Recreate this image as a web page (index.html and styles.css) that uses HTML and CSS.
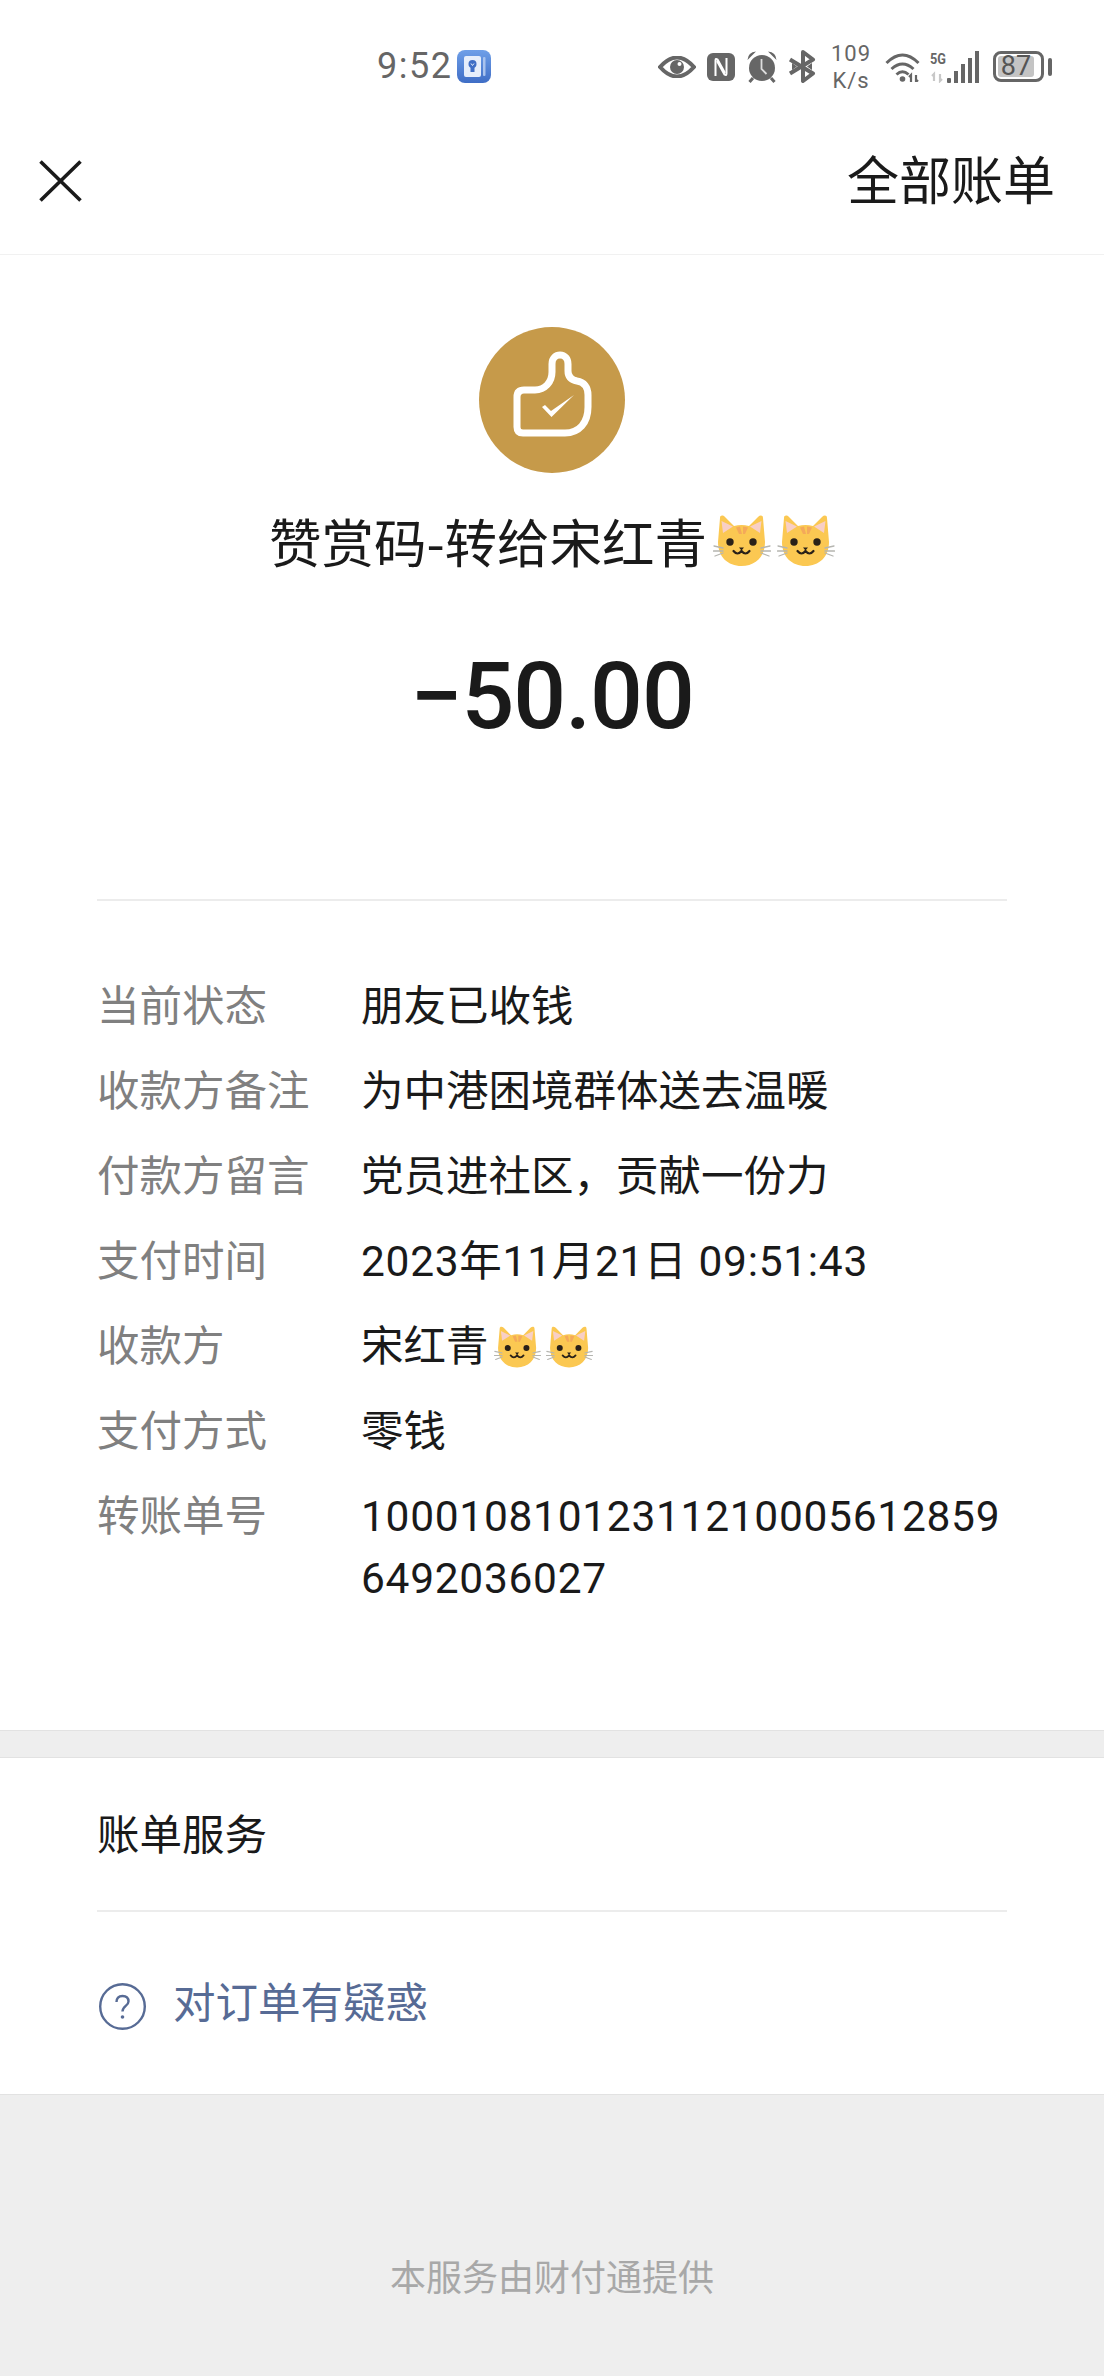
FILE: index.html
```html
<!DOCTYPE html>
<html lang="zh">
<head>
<meta charset="utf-8">
<title>账单详情</title>
<link rel="stylesheet" href="styles.css">
</head>
<body>
<svg class="defs" width="0" height="0" aria-hidden="true">
  <defs>
    <linearGradient id="appgrad" x1="0" y1="0" x2="0" y2="1">
      <stop offset="0" stop-color="#6f9fe8"/>
      <stop offset="1" stop-color="#3f6ec6"/>
    </linearGradient>
    <symbol id="cat" viewBox="0 0 58 52">
      <path d="M7 4C7 1 10 1 12 3L21 12Q28.500 10 36 12L45 3C47 1 50 1 50 4L52 28C52 43 42 52 28.500 52C15 52 5 43 5 28Z" fill="#fbc852"/>
      <path d="M8.500 7L20 12.500L10 19Z M48.500 7L37 12.500L47 19Z" fill="#f8cfc6"/>
      <path d="M23 13.500L27 12.500L29 20L26 20Z M30 12.500L35 13.500L32 20L30 20Z" fill="#f4a95a"/>
      <g stroke="#b5b5b0" stroke-width="1.300" stroke-linecap="round" fill="none">
        <path d="M1 32l9 2M0.500 37l9.500 0M2 42l8-3M57 32l-9 2M57.500 37l-9.500 0M56 42l-8-3"/>
      </g>
      <circle cx="17" cy="28" r="3.700" fill="#2a2118"/>
      <circle cx="40" cy="28" r="3.700" fill="#2a2118"/>
      <path d="M26 33.500h5l-2.500 3z" fill="#2a2118"/>
      <path d="M20.500 37q4 5 8 0q4 5 8 0" fill="none" stroke="#2a2118" stroke-width="2.200" stroke-linecap="round"/>
    </symbol>
  </defs>
</svg>

<header class="status">
  <span class="time">9:52</span>
  <svg class="appicon" viewBox="0 0 34 33">
    <rect width="34" height="33" rx="8" fill="url(#appgrad)"/>
    <rect x="7" y="6" width="17" height="21" rx="2" fill="#e6eefb"/>
    <rect x="26" y="7" width="2.500" height="19" rx="1" fill="#a9c3ee"/>
    <circle cx="15.500" cy="14" r="4" fill="#3f6ec6"/>
    <rect x="13.500" y="17" width="4" height="5" fill="#3f6ec6"/>
    <path d="M14 13.500l1.500 2 1.500-2" fill="none" stroke="#e6eefb" stroke-width="1"/>
  </svg>
  <div class="status-right">
    <svg class="s-eye" viewBox="0 0 38 22">
      <path d="M2 11Q19-8 36 11Q19 30 2 11Z" fill="none" stroke="#666" stroke-width="4"/>
      <circle cx="19" cy="11" r="7" fill="#666"/>
      <circle cx="21.500" cy="8" r="2" fill="#fff"/>
    </svg>
    <svg class="s-nfc" viewBox="0 0 28 28">
      <rect width="28" height="28" rx="6" fill="#666"/>
      <path d="M8.500 23V7.500Q8.500 5 10.500 6.500L18 20" fill="none" stroke="#fff" stroke-width="2"/>
      <path d="M19.500 5V20.500Q19.500 23 17.500 21.500L10 8" fill="none" stroke="#fff" stroke-width="2"/>
    </svg>
    <svg class="s-alarm" viewBox="0 0 30 32">
      <path d="M0.500 9Q1 1 9 0.500Z M29.500 9Q29 1 21 0.500Z" fill="#666"/>
      <path d="M6 27l-3.500 4M24 27l3.500 4" stroke="#666" stroke-width="3"/>
      <circle cx="15" cy="17" r="13" fill="#666"/>
      <path d="M14.500 8v10l5 5" fill="none" stroke="#ddd" stroke-width="1.800"/>
    </svg>
    <svg class="s-bt" viewBox="0 0 28 33">
      <path d="M2 9.500l23 14-10 7.500V2l10 7.500L2 23.500" fill="none" stroke="#666" stroke-width="4" stroke-linejoin="round"/>
      <path d="M19 16.500l5-3.500v7zM9 16.500l-5-3.500v7z" fill="#666"/>
    </svg>
    <div class="speed"><span>109</span><span>K/s</span></div>
    <svg class="s-wifi" viewBox="0 0 37 30">
      <path d="M1.500 11Q17.500-5 33.500 11M6.500 17Q17.500 7 28.500 17M11.500 22.500Q17.500 17 23.500 22.500" fill="none" stroke="#666" stroke-width="3"/>
      <circle cx="17.500" cy="27" r="2.800" fill="#666"/>
      <path d="M26 30v-7l-2 2M31 23v7l2-2" fill="none" stroke="#666" stroke-width="2.200"/>
    </svg>
    <svg class="s-signal" viewBox="0 0 50 32">
      <text x="0" y="13" class="s-5g" textLength="16" lengthAdjust="spacingAndGlyphs">5G</text>
      <path d="M4 30v-7l-2 2M10 23v7l2-2" fill="none" stroke="#c8c8c8" stroke-width="2.200"/>
      <rect x="17" y="27" width="4" height="5" rx="1" fill="#666"/>
      <rect x="24" y="20" width="4" height="12" fill="#666"/>
      <rect x="31" y="13" width="4" height="19" fill="#666"/>
      <rect x="38" y="7" width="4" height="25" fill="#666"/>
      <rect x="45" y="0" width="4" height="32" fill="#666"/>
    </svg>
    <div class="battery">
      <div class="battery-body"><span class="battery-fill">87</span></div>
      <span class="battery-nub"></span>
    </div>
  </div>
</header>

<nav class="nav">
  <svg class="close" viewBox="0 0 43 42">
    <path d="M1.500 1.500L41.500 40.500M41.500 1.500L1.500 40.500" fill="none" stroke="#1a1a1a" stroke-width="3.600"/>
  </svg>
  <span class="nav-link">全部账单</span>
</nav>

<main class="detail">
  <div class="summary">
    <svg class="badge" viewBox="0 0 146 146">
      <circle cx="73" cy="73" r="73" fill="#c69a4a"/>
      <path d="M38 70Q38 63 45 63L56 63C66 63 73 55 73 45L73 37C73 31 77 28 81 28C86 28 89 32 89 37L89 44C89 50 93 53 98 54C105 55 109 60 109 68L109 80C109 96 100 106 86 106L44 106Q38 106 38 100Z" fill="none" stroke="#fff" stroke-width="7" stroke-linejoin="round"/>
      <path d="M63 80L66 78L72 84L95 68L72.500 90Z" fill="#fff"/>
    </svg>
    <h1 class="title">赞赏码-转给宋红青<svg class="cat-lg"><use href="#cat"/></svg><svg class="cat-lg"><use href="#cat"/></svg></h1>
    <div class="amount">−50.00</div>
  </div>

  <dl class="rows">
    <div class="row"><dt>当前状态</dt><dd>朋友已收钱</dd></div>
    <div class="row"><dt>收款方备注</dt><dd>为中港困境群体送去温暖</dd></div>
    <div class="row"><dt>付款方留言</dt><dd>党员进社区，贡献一份力</dd></div>
    <div class="row"><dt>支付时间</dt><dd class="num">2023年11月21日 09:51:43</dd></div>
    <div class="row"><dt>收款方</dt><dd>宋红青<svg class="cat-sm"><use href="#cat"/></svg><svg class="cat-sm"><use href="#cat"/></svg></dd></div>
    <div class="row"><dt>支付方式</dt><dd>零钱</dd></div>
    <div class="row"><dt>转账单号</dt><dd class="num">10001081012311210005612859<br>6492036027</dd></div>
  </dl>
</main>

<section class="service">
  <div class="service-title">账单服务</div>
  <div class="service-link">
    <svg class="help" viewBox="0 0 47 47">
      <circle cx="23.500" cy="23.500" r="22.300" fill="none" stroke="#576b95" stroke-width="2.400"/>
      <path d="M17.500 19Q17.500 13 23.500 13Q29.500 13 29.500 18.500C29.500 23 23.500 23 23.500 28.500" fill="none" stroke="#576b95" stroke-width="2.400"/>
      <circle cx="23.500" cy="34" r="1.800" fill="#576b95"/>
    </svg>
    <span>对订单有疑惑</span>
  </div>
</section>

<footer class="footer">本服务由财付通提供</footer>
</body>
</html>
```
FILE: styles.css
```css
* { box-sizing: border-box; }
html, body { margin: 0; padding: 0; }
body {
  width: 1104px;
  height: 2376px;
  overflow: hidden;
  background: #eeeeee;
  font-family: "Noto Sans CJK SC", "Noto Sans", sans-serif;
  color: #1a1a1a;
}
.defs { position: absolute; }

/* status bar */
.status {
  height: 120px;
  background: #fff;
  display: flex;
  align-items: flex-start;
  padding: 50px 52px 0 377px;
}
.time {
  font-family: Roboto, sans-serif;
  font-size: 36px;
  line-height: 32px;
  letter-spacing: 1.500px;
  color: #666;
}
.appicon { width: 34px; height: 33px; margin-left: 5px; }
.status-right {
  margin-left: auto;
  display: flex;
  align-items: center;
  height: 33px;
}
.s-eye { width: 38px; height: 22px; }
.s-nfc { width: 28px; height: 28px; margin-left: 11px; }
.s-alarm { width: 30px; height: 32px; margin-left: 12px; }
.s-bt { width: 28px; height: 33px; margin-left: 11px; }
.speed {
  display: flex;
  flex-direction: column;
  align-items: center;
  width: 40px;
  margin-left: 15px;
  font-family: Roboto, sans-serif;
  font-size: 22px;
  line-height: 27px;
  letter-spacing: 1px;
  color: #666;
}
.s-wifi { width: 37px; height: 30px; margin-left: 14px; }
.s-signal { width: 50px; height: 32px; margin-left: 8px; }
.s-5g { font-family: Roboto, sans-serif; font-weight: 700; font-size: 15px; fill: #666; }
.battery { display: flex; align-items: center; margin-left: 13px; }
.battery-body {
  width: 51px;
  height: 31px;
  border: 3px solid #666;
  border-radius: 8px;
  padding: 2px;
  display: flex;
}
.battery-fill {
  width: 36px;
  background: #c4c4c4;
  border-radius: 3px;
  font-family: Roboto, sans-serif;
  font-size: 27px;
  line-height: 21px;
  text-align: center;
  color: #555;
}
.battery-nub {
  width: 4px;
  height: 18px;
  margin-left: 4px;
  border-radius: 2px;
  background: #666;
}

/* nav */
.nav {
  height: 135px;
  background: #fff;
  border-bottom: 1px solid #f1f1f1;
  display: flex;
  align-items: center;
  justify-content: space-between;
  padding: 0 49px 12px 39px;
}
.close { width: 43px; height: 42px; }
.nav-link { font-size: 52px; line-height: 60px; margin-bottom: 6px; }

/* detail */
.detail {
  height: 1476px;
  background: #fff;
  border-bottom: 1px solid #e2e2e2;
  padding: 72px 97px 0;
}
.summary {
  height: 574px;
  border-bottom: 2px solid #ececec;
  display: flex;
  flex-direction: column;
  align-items: center;
}
.badge { width: 146px; height: 146px; }
.title {
  margin: 37px 0 0;
  display: flex;
  align-items: center;
  font-size: 52.500px;
  font-weight: 400;
  line-height: 60px;
}
.cat-lg { width: 58px; height: 52px; margin-left: 6px; }
.amount {
  margin-top: 72px;
  font-family: Roboto, sans-serif;
  font-weight: 500;
  font-size: 93px;
  line-height: 110px;
  letter-spacing: -1px;
  color: #1a1a1a;
}
.rows {
  margin: 75px 0 0;
  display: flex;
  flex-direction: column;
  gap: 23px;
}
.row {
  display: flex;
  font-family: Roboto, "Noto Sans CJK SC", sans-serif;
  font-size: 42.500px;
  line-height: 62px;
}
.row dt { width: 264px; flex: none; color: #808080; }
.row dd { margin: 0; }
.row dd.num { letter-spacing: 0.700px; }
.cat-sm { width: 47px; height: 43px; margin-left: 5px; vertical-align: -7px; }

/* service */
.service {
  margin-top: 26px;
  height: 338px;
  background: #fff;
  border-top: 1px solid #e2e2e2;
  border-bottom: 1px solid #e2e2e2;
  padding: 0 97px;
}
.service-title {
  height: 154px;
  border-bottom: 2px solid #ececec;
  font-size: 42.500px;
  line-height: 148px;
}
.service-link {
  display: flex;
  align-items: flex-start;
  padding: 71px 0 0 2px;
  color: #576b95;
  font-size: 42.500px;
  line-height: 56px;
}
.service-link span { margin: -11px 0 0 27px; }
.help { width: 47px; height: 47px; }

/* footer */
.footer {
  margin-top: 152px;
  text-align: center;
  font-size: 36px;
  line-height: 56px;
  color: #a8a8a8;
}
```
